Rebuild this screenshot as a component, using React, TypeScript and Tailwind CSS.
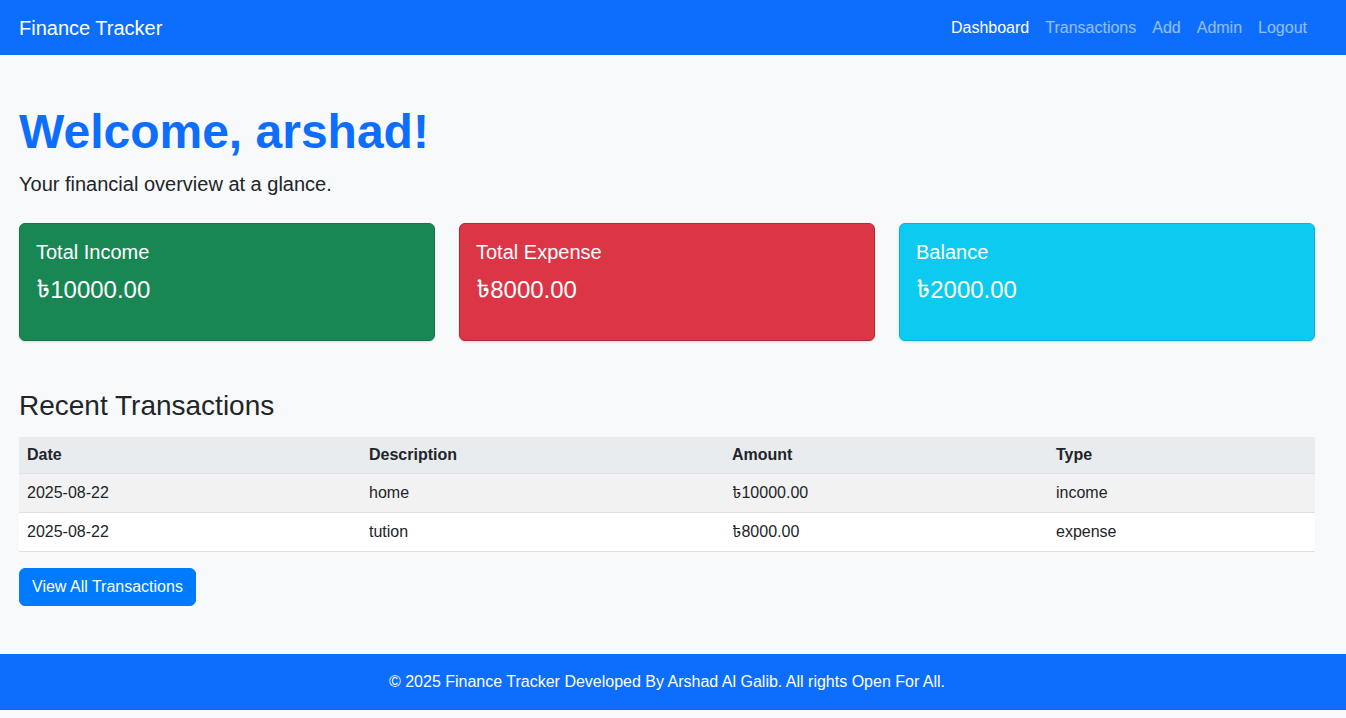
import React from 'react';

interface Txn {
  date: string;
  description: string;
  amount: string;
  type: string;
}

const transactions: Txn[] = [
  { date: '2025-08-22', description: 'home', amount: '৳10000.00', type: 'income' },
  { date: '2025-08-22', description: 'tution', amount: '৳8000.00', type: 'expense' },
];

const navLinks = ['Dashboard', 'Transactions', 'Add', 'Admin', 'Logout'];

const SummaryCard: React.FC<{ title: string; value: string; className: string }> = ({ title, value, className }) => (
  <div className={`h-[118px] rounded-[6px] border shadow-sm p-4 text-white ${className}`}>
    <h5 className="text-[20px] leading-[24px] mb-2">{title}</h5>
    <p className="text-[24px] leading-[36px]">{value}</p>
  </div>
);

const App: React.FC = () => {
  return (
    <div className="min-h-screen bg-[#f8f9fa] text-[#212529] pb-2 font-['Liberation_Sans','Noto_Sans_Bengali',Arial,sans-serif]">
      <nav className="h-[55px] bg-[#0d6efd] flex items-center justify-between pl-[19px] pr-[31px]">
        <a href="#" className="text-white text-[20px] leading-[30px]">Finance Tracker</a>
        <ul className="flex">
          {navLinks.map((link, i) => (
            <li key={link}>
              <a
                href="#"
                className={`block px-2 text-[16px] leading-[24px] ${i === 0 ? 'text-white' : 'text-white/55'}`}
              >
                {link}
              </a>
            </li>
          ))}
        </ul>
      </nav>

      <main className="pl-[19px] pr-[31px] pt-[48px]">
        <h1 className="text-[48px] leading-[58px] font-bold text-[#0d6efd] mb-2">Welcome, arshad!</h1>
        <p className="text-[20px] leading-[30px] mb-6">Your financial overview at a glance.</p>

        <div className="grid grid-cols-3 gap-6">
          <SummaryCard title="Total Income" value="৳10000.00" className="bg-[#198754] border-[#157347]" />
          <SummaryCard title="Total Expense" value="৳8000.00" className="bg-[#dc3545] border-[#b02a37]" />
          <SummaryCard title="Balance" value="৳2000.00" className="bg-[#0dcaf0] border-[#0bb1d3]" />
        </div>

        <h3 className="mt-12 text-[28px] leading-[34px] mb-[14px]">Recent Transactions</h3>

        <table className="w-full border-collapse text-[16px]">
          <thead>
            <tr className="bg-[#e9ecef] border-b border-[#dee2e6] h-[36px]">
              <th className="w-[342px] px-2 text-left font-bold">Date</th>
              <th className="w-[363px] px-2 text-left font-bold">Description</th>
              <th className="w-[324px] px-2 text-left font-bold">Amount</th>
              <th className="px-2 text-left font-bold">Type</th>
            </tr>
          </thead>
          <tbody>
            {transactions.map((t, i) => (
              <tr key={i} className={`h-[39px] border-b border-[#dee2e6] ${i % 2 === 0 ? 'bg-[#f2f2f2]' : 'bg-white'}`}>
                <td className="px-2">{t.date}</td>
                <td className="px-2">{t.description}</td>
                <td className="px-2">{t.amount}</td>
                <td className="px-2">{t.type}</td>
              </tr>
            ))}
          </tbody>
        </table>

        <button className="mt-4 h-[38px] px-3 rounded-[6px] border border-[#007bff] bg-[#007bff] text-white text-[16px] leading-[24px]">
          View All Transactions
        </button>
      </main>

      <footer className="mt-12 bg-[#0d6efd] text-white py-4 pl-[19px] pr-[31px]">
        <p className="text-center text-[16px] leading-[24px]">
          © 2025 Finance Tracker Developed By Arshad Al Galib. All rights Open For All.
        </p>
      </footer>
    </div>
  );
};

export default App;
